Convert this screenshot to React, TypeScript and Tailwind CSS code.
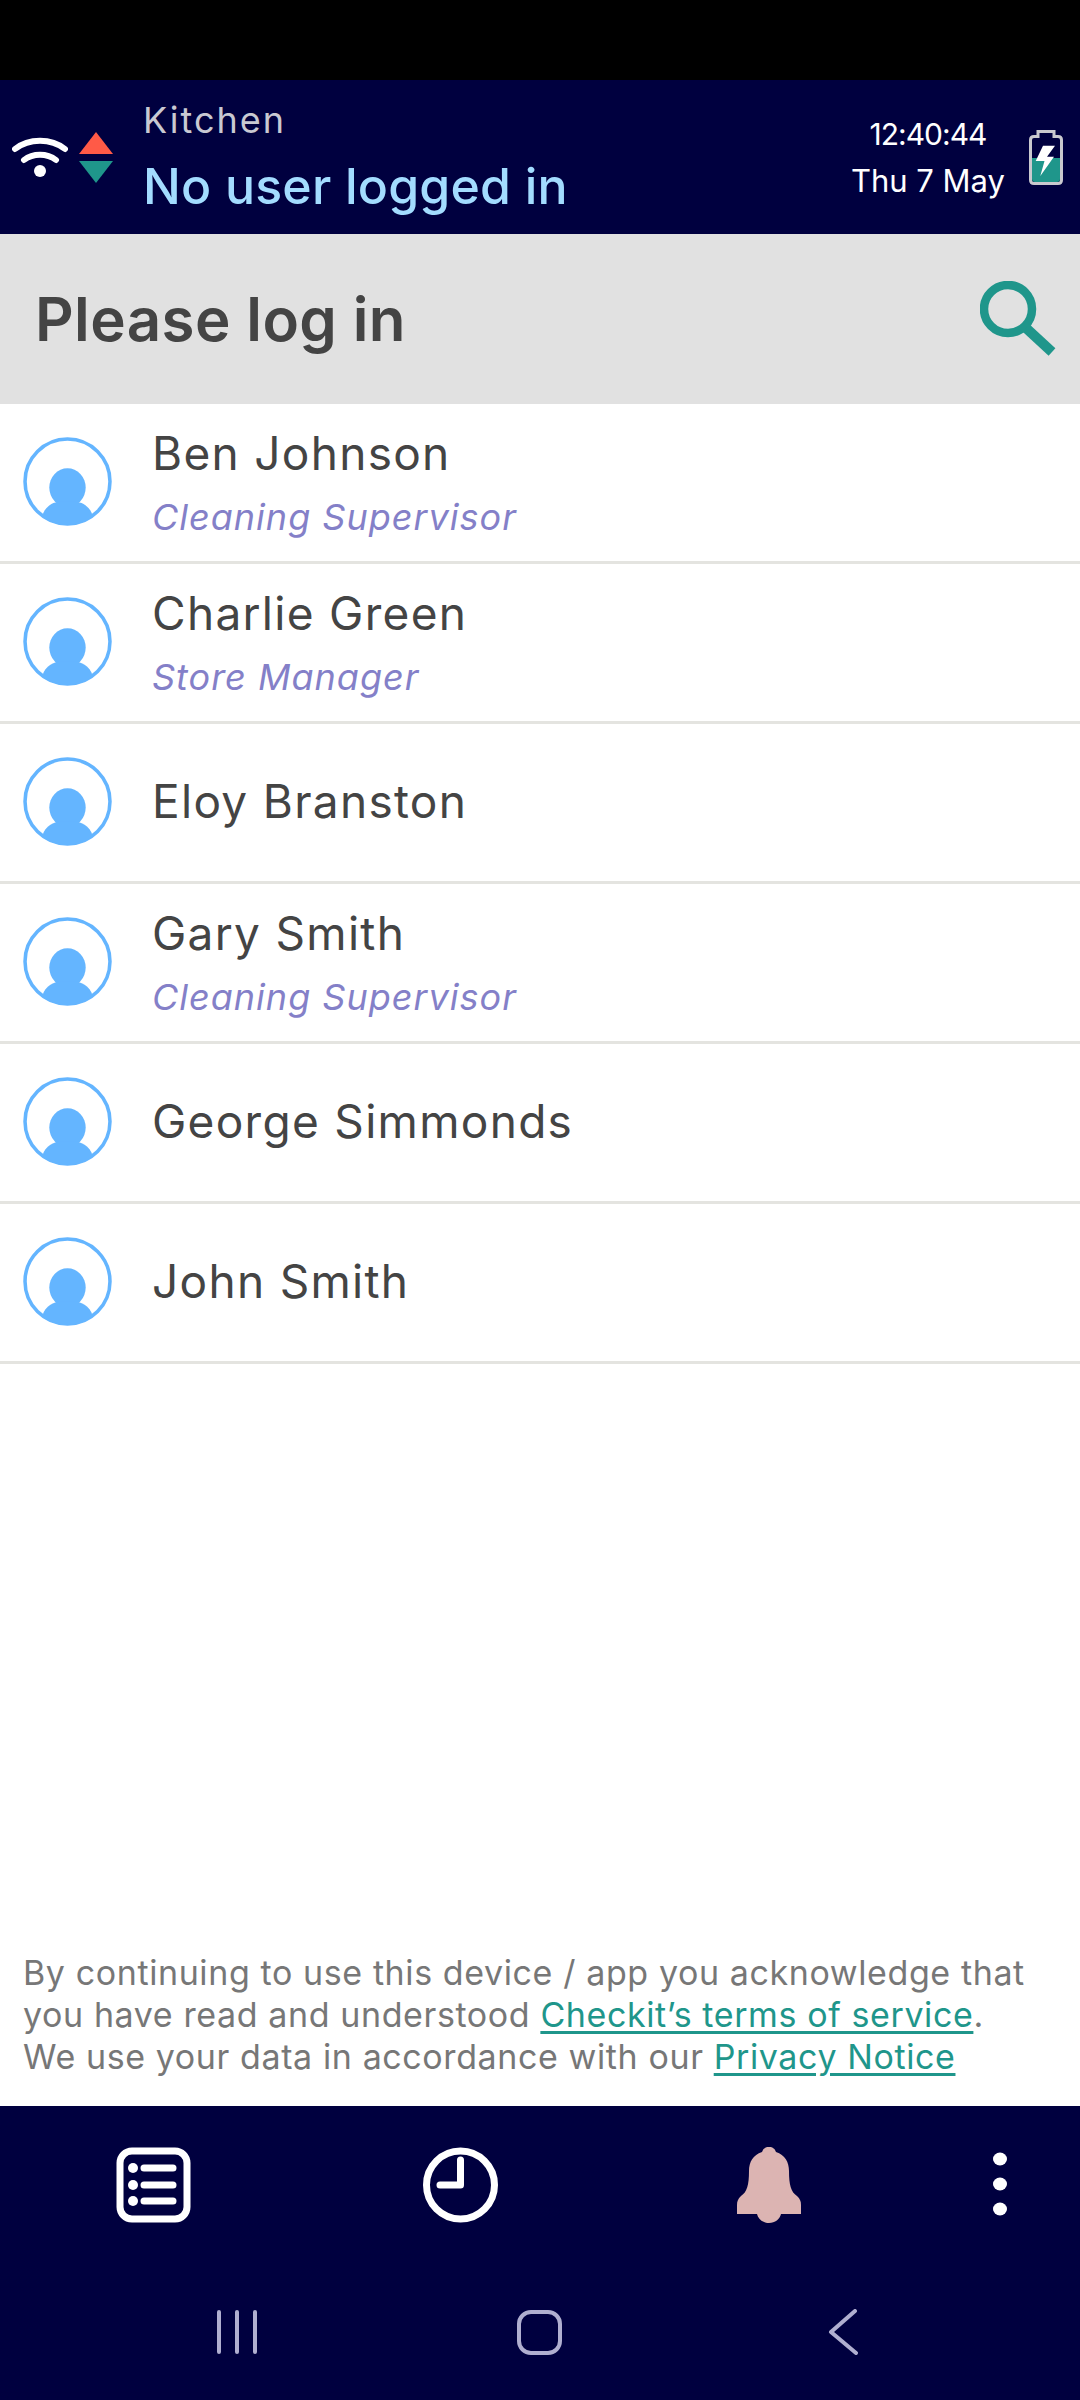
const people = [
  { name: 'Ben Johnson', role: 'Cleaning Supervisor' },
  { name: 'Charlie Green', role: 'Store Manager' },
  { name: 'Eloy Branston', role: '' },
  { name: 'Gary Smith', role: 'Cleaning Supervisor' },
  { name: 'George Simmonds', role: '' },
  { name: 'John Smith', role: '' },
];

function Avatar() {
  return (
    <svg width="89" height="89" viewBox="0 0 88 88" className="shrink-0">
      <defs>
        <clipPath id="avatar-clip">
          <circle cx="44" cy="44" r="43" />
        </clipPath>
      </defs>
      <circle cx="44" cy="44" r="42" fill="none" stroke="#64b5ff" strokeWidth="3.5" />
      <g clipPath="url(#avatar-clip)" fill="#64b5ff">
        <ellipse cx="44" cy="50" rx="18" ry="19" />
        <path d="M19 88 V 80 C19 72 28 64 36 64 H52 C60 64 69 72 69 80 V88 Z" />
      </g>
    </svg>
  );
}

function Row({ name, role }: { name: string; role: string }) {
  return (
    <div className="h-[160px] flex items-center pl-[23px] pb-[3px] border-b-[3px] border-[#e4e4e0] bg-white">
      <Avatar />
      <div className={role ? 'ml-[40px] mt-[3px] flex flex-col' : 'ml-[40px] flex flex-col'}>
        <span className="text-[46px] leading-[56px] text-[#444444] tracking-[1.3px]">{name}</span>
        {role && (
          <span className="mt-[13px] text-[36px] leading-[46px] italic text-[#8480c8] tracking-[1px]">{role}</span>
        )}
      </div>
    </div>
  );
}

export default function App() {
  return (
    <div className="w-[1080px] h-[2400px] flex flex-col bg-white font-['Inter',sans-serif] overflow-hidden">
      <div className="h-[80px] bg-black" />

      {/* Barra superior */}
      <div className="h-[154px] bg-[#00003f] flex items-center">
        <svg width="56" height="40" viewBox="0 0 56 40" className="ml-[12px]">
          <path d="M3 12 C17 1 39 1 53 12" fill="none" stroke="#fff" strokeWidth="6" strokeLinecap="round" />
          <path d="M12 23 C21 16 35 16 44 23" fill="none" stroke="#fff" strokeWidth="6" strokeLinecap="round" />
          <circle cx="28" cy="34" r="6" fill="#fff" />
        </svg>
        <svg width="34" height="51" viewBox="0 0 34 51" className="ml-[11px]">
          <path d="M17 0 L34 22 H0 Z" fill="#ff5a47" />
          <path d="M0 29 H34 L17 51 Z" fill="#1f968b" />
        </svg>
        <div className="ml-[30px] flex flex-col">
          <span className="text-[36px] leading-[44px] text-[#c9c9d2] tracking-[2px]">Kitchen</span>
          <span className="mt-[14px] text-[50px] leading-[60px] font-medium text-[#a3dcff] tracking-[0.2px]">No user logged in</span>
        </div>
        <div className="ml-auto flex flex-col items-center text-white">
          <span className="text-[30px] leading-[42px] tracking-[-1px]">12:40:44</span>
          <span className="mt-[5px] text-[31px] leading-[42px]">Thu 7 May</span>
        </div>
        <svg width="34" height="55" viewBox="0 0 34 55" className="ml-[24px] mr-[17px]">
          <path d="M9 1.5 H25 V6.5 H29 Q32.5 6.5 32.5 10 V50 Q32.5 53.5 29 53.5 H5 Q1.5 53.5 1.5 50 V10 Q1.5 6.5 5 6.5 H9 Z" fill="#00003f" stroke="#c9c9cf" strokeWidth="3" />
          <path d="M3 28 H31 V49 Q31 52 28 52 H6 Q3 52 3 49 Z" fill="#1f968b" />
          <path d="M14 15.7 H26 L18 26.7 H25 L11.3 46 L15.5 31 H6.7 Z" fill="#fff" />
        </svg>
      </div>

      <div className="h-[170px] bg-[#e1e1e1] flex items-center justify-between pl-[35px] pr-[24px]">
        <span className="text-[60px] font-semibold text-[#444444] tracking-[0.4px]">Please log in</span>
        <svg width="76" height="76" viewBox="0 0 76 76">
          <circle cx="28" cy="28" r="24" fill="none" stroke="#1f968b" strokeWidth="8.5" />
          <path d="M46 47 L72 71" stroke="#1f968b" strokeWidth="10" />
        </svg>
      </div>

      {people.map((p) => (
        <Row key={p.name} name={p.name} role={p.role} />
      ))}

      <div className="mt-auto pl-[23px] pb-[28px] text-[34px] leading-[42px] tracking-[0.6px] text-[#777777] whitespace-nowrap">
        <p>By continuing to use this device / app you acknowledge that</p>
        <p>
          you have read and understood <a className="text-[#1f968b] underline underline-offset-4">Checkit’s terms of service</a>.
        </p>
        <p>
          We use your data in accordance with our <a className="text-[#1f968b] underline underline-offset-4">Privacy Notice</a>
        </p>
      </div>

      {/* Navegacion inferior */}
      <div className="h-[294px] bg-[#00003f] flex flex-col">
        <div className="flex items-center mt-[41px] pl-[116px]">
          <svg width="75" height="76" viewBox="0 0 75 76">
            <rect x="4" y="4" width="67" height="68" rx="12" fill="none" stroke="#fff" strokeWidth="7" />
            <circle cx="17" cy="21" r="5" fill="#fff" />
            <circle cx="17" cy="38" r="5" fill="#fff" />
            <circle cx="17" cy="54" r="5" fill="#fff" />
            <path d="M28 21 H57 M28 38 H57 M28 54 H57" stroke="#fff" strokeWidth="7" strokeLinecap="round" />
          </svg>
          <svg width="75" height="76" viewBox="0 0 75 76" className="ml-[232px]">
            <circle cx="37.5" cy="38" r="34" fill="none" stroke="#fff" strokeWidth="7" />
            <path d="M37.5 13 V38 H17" fill="none" stroke="#fff" strokeWidth="7" strokeLinecap="round" strokeLinejoin="round" />
          </svg>
          <svg width="64" height="76" viewBox="0 0 64 76" className="ml-[239px]">
            <path d="M32 0 C36 0 38 2 39 5 C48 8 52 15 52 24 C52 38 54 45 60 49 C63 52 64 54 64 58 V67 H44 C43 72 38 76 32 76 C26 76 21 72 20 67 H0 V58 C0 54 1 52 4 49 C10 45 12 38 12 24 C12 15 16 8 25 5 C26 2 28 0 32 0 Z" fill="#dcb4b2" />
          </svg>
          <svg width="14" height="64" viewBox="0 0 14 64" className="ml-[192px] mt-[-2px]">
            <ellipse cx="7" cy="7" rx="7" ry="6.5" fill="#fff" />
            <ellipse cx="7" cy="32" rx="7" ry="6.5" fill="#fff" />
            <ellipse cx="7" cy="57" rx="7" ry="6.5" fill="#fff" />
          </svg>
        </div>
        <div className="flex items-center mt-[86px] pl-[217px]">
          <svg width="40" height="44" viewBox="0 0 40 44" className="text-[#b0afd0]">
            <path d="M2 2 V42 M20 2 V42 M38 2 V42" stroke="currentColor" strokeWidth="4" strokeLinecap="round" />
          </svg>
          <div className="ml-[260px] w-[45px] h-[45px] rounded-[14px] border-[4px] border-[#b0afd0]" />
          <svg width="30" height="46" viewBox="0 0 30 46" className="ml-[266px] text-[#b0afd0]">
            <path d="M27 2 L3 23 L28 44" fill="none" stroke="currentColor" strokeWidth="4" strokeLinecap="round" strokeLinejoin="round" />
          </svg>
        </div>
      </div>
    </div>
  );
}
